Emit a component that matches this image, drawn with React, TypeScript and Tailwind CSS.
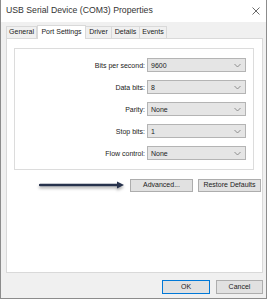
import React from 'react';

const font = { fontFamily: '"Liberation Sans", Arial, sans-serif' };

const tabs = ['General', 'Port Settings', 'Driver', 'Details', 'Events'];
const tabWidths = ['w-[31px]', 'w-[49px]', 'w-[27px]', 'w-[29px]', 'w-[28px]'];

const rows = [
  { label: 'Bits per second:', value: '9600' },
  { label: 'Data bits:', value: '8' },
  { label: 'Parity:', value: 'None' },
  { label: 'Stop bits:', value: '1' },
  { label: 'Flow control:', value: 'None' },
];

function Chevron() {
  return (
    <svg width="7" height="5" viewBox="0 0 7 5" className="shrink-0">
      <path d="M0.5 1 L3.5 4 L6.5 1" fill="none" stroke="#7a7a7a" strokeWidth="0.8" />
    </svg>
  );
}

function Combo({ value }: { value: string }) {
  return (
    <div className="w-[99px] h-[14px] bg-[#e5e5e5] border border-[#b4b4b4] flex items-center justify-between pl-[3px] pr-[4px]">
      <span className="text-[7px] text-[#222] leading-none">{value}</span>
      <Chevron />
    </div>
  );
}

export default function App() {
  return (
    <div className="w-[269px] h-[300px] bg-white" style={font}>
      <div className="w-[267px] h-[299px] bg-[#f0f0f0] border-l border-r border-b border-[#8c8c8c] flex flex-col">
        {/* title bar */}
        <div className="h-[22px] bg-white flex items-center justify-between pl-[5px] pr-[6px]">
          <span className="text-[8.7px] text-[#333]">USB Serial Device (COM3) Properties</span>
          <svg width="8" height="8" viewBox="0 0 8 8">
            <path d="M0.5 0.5 L7.5 7.5 M7.5 0.5 L0.5 7.5" stroke="#444" strokeWidth="0.8" />
          </svg>
        </div>

        <div className="pl-[5px] pr-[3px] pt-[2px]">
          {/* tabs */}
          <div className="flex items-end h-[14px]">
            {tabs.map((t, i) =>
              i === 1 ? (
                <div
                  key={t}
                  className={`${tabWidths[i]} h-[14px] bg-white border-l border-t border-r border-[#d9d9d9] -mb-px relative z-10 flex items-center justify-center text-[7px] text-[#222]`}
                >
                  {t}
                </div>
              ) : (
                <div
                  key={t}
                  className={`${tabWidths[i]} h-[12px] bg-[#f0f0f0] border-l border-t border-r border-[#d9d9d9] -ml-px first:ml-0 flex items-center justify-center text-[7px] text-[#222]`}
                >
                  {t}
                </div>
              )
            )}
          </div>

          {/* panel */}
          <div className="h-[235px] bg-white border border-[#d9d9d9] pt-[9px] pl-[7px]">
            <div className="w-[240px] h-[122px] border border-[#dcdcdc] pt-[9px] flex flex-col gap-[8px]">
              {rows.map((r) => (
                <div key={r.label} className="flex items-center h-[14px]">
                  <span className="w-[132px] text-right pr-[2px] text-[7px] text-[#222] leading-none">{r.label}</span>
                  <Combo value={r.value} />
                </div>
              ))}
            </div>

            <div className="flex items-center mt-[9px] h-[13px]">
              <svg width="88" height="12" viewBox="0 0 88 12" className="ml-[25px]" style={{ filter: 'drop-shadow(0 2px 1.5px rgba(0,0,0,0.35))' }}>
                <line x1="1" y1="5" x2="80" y2="5" stroke="#27324c" strokeWidth="2.4" strokeLinecap="round" />
                <path d="M78 1.5 L85 5 L78 8.5 Z" fill="#27324c" />
              </svg>
              <div className="ml-[3px] w-[63px] h-[13px] bg-[#e1e1e1] border border-[#adadad] flex items-center justify-center text-[7px] text-[#222]">
                Advanced...
              </div>
              <div className="ml-[5px] w-[63px] h-[13px] bg-[#e1e1e1] border border-[#adadad] flex items-center justify-center text-[7px] text-[#222]">
                Restore Defaults
              </div>
            </div>
          </div>

          {/* bottom buttons */}
          <div className="flex justify-end gap-[6px] mt-[7px]">
            <div className="w-[48px] h-[14px] bg-[#e1e1e1] border border-[#0078d7] flex items-center justify-center text-[7px] text-[#222]">
              OK
            </div>
            <div className="w-[47px] h-[14px] bg-[#e1e1e1] border border-[#adadad] flex items-center justify-center text-[7px] text-[#222]">
              Cancel
            </div>
          </div>
        </div>
      </div>
    </div>
  );
}
